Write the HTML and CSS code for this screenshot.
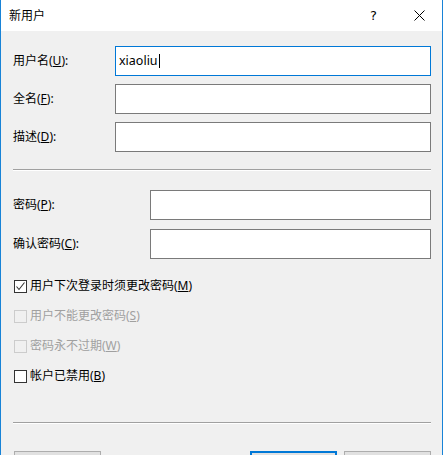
FILE: index.html
```html
<!DOCTYPE html>
<html lang="zh-CN">
<head>
<meta charset="utf-8">
<title>新用户</title>
<link rel="stylesheet" href="styles.css">
</head>
<body>
<div class="dialog">
  <div class="titlebar">
    <span class="title">新用户</span>
    <span class="tb-btn help">?</span>
    <span class="tb-btn close">
      <svg width="11" height="11" viewBox="0 0 11 11"><path d="M0.5 0.5L10.5 10.5M10.5 0.5L0.5 10.5" stroke="#000" stroke-width="1" fill="none"/></svg>
    </span>
  </div>
  <div class="content">
    <div class="fields names">
      <label class="lbl">用户名(<u>U</u>):</label>
      <div class="input focused"><span class="val">xiaoliu</span><span class="caret"></span></div>
      <label class="lbl">全名(<u>F</u>):</label>
      <div class="input"></div>
      <label class="lbl">描述(<u>D</u>):</label>
      <div class="input"></div>
    </div>
    <div class="sep top-sep"></div>
    <div class="fields pw">
      <label class="lbl">密码(<u>P</u>):</label>
      <div class="input"></div>
      <label class="lbl">确认密码(<u>C</u>):</label>
      <div class="input"></div>
    </div>
    <div class="checks">
      <div class="check">
        <span class="box checked"><svg width="11" height="11" viewBox="0 0 11 11"><path d="M1.5 5.5L4 8.5L9.5 1.5" stroke="#333" stroke-width="1.1" fill="none"/></svg></span>
        <span class="ctext">用户下次登录时须更改密码(<u>M</u>)</span>
      </div>
      <div class="check disabled">
        <span class="box"></span>
        <span class="ctext">用户不能更改密码(<u>S</u>)</span>
      </div>
      <div class="check disabled">
        <span class="box"></span>
        <span class="ctext">密码永不过期(<u>W</u>)</span>
      </div>
      <div class="check">
        <span class="box"></span>
        <span class="ctext">帐户已禁用(<u>B</u>)</span>
      </div>
    </div>
    <div class="sep bottom-sep"></div>
    <div class="buttons">
      <button class="btn first" aria-label="帮助"></button>
      <span class="spacer"></span>
      <button class="btn default" aria-label="创建"></button>
      <button class="btn" aria-label="关闭"></button>
    </div>
  </div>
</div>
</body>
</html>
```
FILE: styles.css
```css
html, body {
  margin: 0;
  padding: 0;
  background: #f0f0f0;
}

body {
  width: 443px;
  height: 455px;
  overflow: hidden;
  font-family: "Noto Sans", "Noto Sans CJK SC", sans-serif;
  font-size: 12px;
  color: #000;
}

.dialog {
  box-sizing: border-box;
  width: 443px;
  height: 455px;
  border-left: 1px solid #1883d7;
  border-right: 1px solid #1883d7;
  background: #f0f0f0;
  overflow: hidden;
}

.titlebar {
  height: 31px;
  background: #fff;
  display: flex;
  align-items: center;
  padding-left: 8px;
}

.title {
  flex: 1;
  font-size: 12px;
  line-height: 16px;
}

.tb-btn {
  width: 46px;
  height: 31px;
  display: flex;
  align-items: center;
  justify-content: center;
}

.help {
  font-family: "DejaVu Sans", sans-serif;
  font-size: 13px;
  line-height: 13px;
  padding-left: 1px;
  box-sizing: border-box;
}

.close svg {
  display: block;
}

.content {
  padding: 15px 11px 0 12px;
}

.fields {
  display: grid;
  align-items: center;
}

.names {
  grid-template-columns: 102px 1fr;
  row-gap: 8px;
}

.pw {
  grid-template-columns: 137px 1fr;
  row-gap: 9px;
  margin-top: 19px;
}

.lbl {
  line-height: 16px;
  white-space: nowrap;
}

.input {
  box-sizing: border-box;
  height: 30px;
  background: #fff;
  border: 1px solid #7a7a7a;
  display: flex;
  align-items: center;
  padding-left: 3px;
}

.input.focused {
  border-color: #0078d7;
}

.val {
  line-height: 16px;
  font-size: 12.5px;
}

.caret {
  display: inline-block;
  width: 1px;
  height: 14px;
  background: #000;
  margin-left: 1px;
}

.sep {
  height: 1px;
  background: #a0a0a0;
  border-bottom: 1px solid #fff;
}

.top-sep {
  margin-top: 17px;
}

.bottom-sep {
  margin-top: 36px;
}

.checks {
  margin-top: 17px;
  display: flex;
  flex-direction: column;
  gap: 10px;
}

.check {
  height: 20px;
  display: flex;
  align-items: center;
}

.box {
  box-sizing: border-box;
  width: 13px;
  height: 13px;
  border: 1px solid #333;
  background: #fff;
  margin-left: 1px;
  margin-right: 3px;
  display: flex;
  align-items: center;
  justify-content: center;
}

.box svg {
  display: block;
}

.ctext {
  line-height: 16px;
  white-space: nowrap;
}

.check.disabled .box {
  border-color: #cccccc;
  background: #f0f0f0;
}

.check.disabled .ctext {
  color: #a0a0a0;
}

.buttons {
  margin-top: 27px;
  display: flex;
  gap: 7px;
}

.spacer {
  flex: 1;
}

.btn {
  box-sizing: border-box;
  width: 87px;
  height: 26px;
  background: #e1e1e1;
  border: 1px solid #adadad;
  padding: 0;
}

.btn.first {
  margin-left: 1px;
}

.btn.default {
  border: 2px solid #0078d7;
}
```
